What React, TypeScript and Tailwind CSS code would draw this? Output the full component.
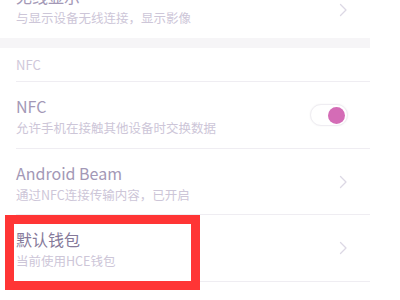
import React from 'react';

const font = { fontFamily: '"Noto Sans CJK SC", "Noto Sans", sans-serif' };

function Chevron() {
    return (
        <svg width="9" height="14" viewBox="0 0 9 14" fill="none" className="shrink-0">
            <path d="M1.5 1.5L7 7l-5.5 5.5" stroke="#dcd8e4" strokeWidth="1.3" strokeLinecap="round" strokeLinejoin="round" />
        </svg>
    );
}

function Toggle() {
    return (
        <div className="w-[38px] h-[22px] rounded-full bg-white border border-[#efedf2] flex items-center justify-end pr-[2px] shadow-[0_0_2px_rgba(0,0,0,0.05)]">
            <div className="w-[17px] h-[17px] rounded-full bg-[#d46cb6]" />
        </div>
    );
}

function Row({ title, sub, right, strong, height }: { title: string; sub: string; right: React.ReactNode; strong?: boolean; height: string }) {
    return (
        <div className={`flex items-center justify-between border-b border-[#efedf2] ${height}`}>
            <div className="flex flex-col pt-[2px]">
                <span className={`text-[16px] leading-[21px] ${strong ? 'text-[#85799a]' : 'text-[#a398b6]'}`}>{title}</span>
                <span className="text-[12.5px] leading-[16px] mt-[3px] text-[#cdc6d8]">{sub}</span>
            </div>
            <div className="pr-[22px]">{right}</div>
        </div>
    );
}

export default function App() {
    return (
        <div className="w-[400px] h-[300px] bg-white overflow-hidden" style={font}>
            <div className="w-[370px]">
                {/* 无线显示 (cropped at the top) */}
                <div className="pl-4 -mt-[14px] h-[52px] flex items-start justify-between">
                    <div className="flex flex-col">
                        <span className="text-[16px] leading-[21px] text-[#a398b6]">无线显示</span>
                        <span className="text-[12.5px] leading-[16px] mt-[3px] text-[#cdc6d8]">与显示设备无线连接，显示影像</span>
                    </div>
                    <div className="pr-[22px] pt-[17px]"><Chevron /></div>
                </div>

                <div className="h-[10px] bg-[#f6f5f7]" />

                <div className="pl-4">
                    <div className="h-[34px] flex items-center border-b border-[#efedf2]">
                        <span className="text-[13px] text-[#cfc8da]">NFC</span>
                    </div>

                    <Row title="NFC" sub="允许手机在接触其他设备时交换数据" right={<Toggle />} height="h-[67px]" />
                    <Row title="Android Beam" sub="通过NFC连接传输内容，已开启" right={<Chevron />} height="h-[66px]" />

                    <div className="relative">
                        <Row title="默认钱包" sub="当前使用HCE钱包" right={<Chevron />} strong height="h-[67px]" />
                        <div className="absolute left-[-11px] top-0 w-[195px] h-[75px] border-[9px] border-[#ff3535]" />
                    </div>
                </div>
            </div>
        </div>
    );
}
